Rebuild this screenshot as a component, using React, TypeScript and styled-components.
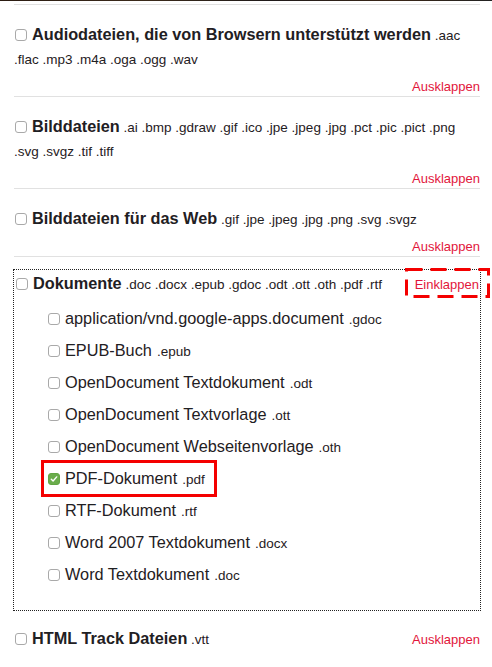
import React from 'react';
import styled, { createGlobalStyle } from 'styled-components';

const Global = createGlobalStyle`
  html, body { margin: 0; padding: 0; background: #fff; }
  body {
    font-family: "Liberation Sans", Arial, Helvetica, sans-serif;
    color: #1f2023;
  }
`;

const Page = styled.div`
  width: 492px;
  overflow: hidden;
`;

const TopStrip = styled.div`
  height: 1px;
  margin-bottom: 3px;
  background: linear-gradient(90deg, #2b1c12, #3b2a1a 30%, #1f1a1a 55%, #3a2616 80%, #222);
`;

const List = styled.div`
  padding: 0 12px 0 14px;
`;

const Divider = styled.div`
  height: 1px;
  background: #e1e1e1;
`;

const Section = styled.section<{ $last?: boolean }>`
  padding: 19px 0 1px;
  border-bottom: ${(p) => (p.$last ? 'none' : '1px solid #e1e1e1')};
`;

const TitleLine = styled.p`
  margin: 0;
  font-size: 13.5px;
  line-height: 24px;
`;

const Name = styled.strong`
  font-size: 16.3px;
  line-height: 16px;
  font-weight: 700;
`;

const Box = styled.span<{ $checked?: boolean }>`
  display: inline-flex;
  align-items: center;
  justify-content: center;
  box-sizing: border-box;
  width: 12px;
  height: 12px;
  border-radius: 3px;
  border: 1px solid ${(p) => (p.$checked ? '#62a544' : '#a9a9a9')};
  background: ${(p) => (p.$checked ? '#6aac4c' : '#fff')};
  vertical-align: -1px;
  margin: 0 5px 0 1px;
  flex: none;
`;

const Footer = styled.div`
  display: flex;
  justify-content: flex-end;
  margin-top: 7px;
  line-height: 16px;
`;

const Toggle = styled.a<{ $float?: boolean }>`
  color: #e2163b;
  font-size: 13px;
  text-decoration: none;
  cursor: pointer;
  position: relative;
  ${(p) => (p.$float ? 'float: right; line-height: 24px;' : '')}
`;

const DashedMark = styled.svg`
  position: absolute;
  left: -10px;
  top: -5px;
  width: 85px;
  height: 30px;
  overflow: visible;
  pointer-events: none;
`;

const Group = styled.div`
  margin: 12px -1px 0 -1px;
  border: 1px dotted #222;
  padding: 3px 1px 20px 1px;
`;

const SubList = styled.ul`
  list-style: none;
  margin: 5px 0 0;
  padding: 0 0 0 33px;
`;

const Item = styled.li`
  display: flex;
  align-items: center;
  height: 32px;
`;

const ItemLabel = styled.label<{ $highlight?: boolean }>`
  position: relative;
  display: inline-flex;
  align-items: center;
  height: 32px;
  font-size: 16.3px;
  white-space: nowrap;
  ${(p) =>
    p.$highlight
      ? `&::after {
    content: '';
    position: absolute;
    left: -7px;
    right: -12px;
    top: -2px;
    bottom: -3px;
    border: 3px solid #f40000;
    pointer-events: none;
  }`
      : ''}
  ${Box} { margin: 1px 5px 0 0; }
`;

const Ext = styled.span`
  font-size: 13.5px;
  margin-left: 5px;
  padding-top: 3px;
`;

const LastSection = styled.section`
  margin-top: 17px;
`;

const Check = ({ checked }: { checked?: boolean }) => (
  <Box $checked={checked}>
    {checked && (
      <svg width="8" height="8" viewBox="0 0 8 8">
        <path d="M1.3 4.2 L3.1 6 L6.7 1.9" fill="none" stroke="#fff" strokeWidth="1.4" strokeLinecap="round" strokeLinejoin="round" />
      </svg>
    )}
  </Box>
);

const categories = [
  { name: 'Audiodateien, die von Browsern unterstützt werden', exts: '.aac .flac .mp3 .m4a .oga .ogg .wav' },
  { name: 'Bilddateien', exts: '.ai .bmp .gdraw .gif .ico .jpe .jpeg .jpg .pct .pic .pict .png .svg .svgz .tif .tiff' },
  { name: 'Bilddateien für das Web', exts: '.gif .jpe .jpeg .jpg .png .svg .svgz' },
];

const docs = [
  { name: 'application/vnd.google-apps.document', ext: '.gdoc' },
  { name: 'EPUB-Buch', ext: '.epub' },
  { name: 'OpenDocument Textdokument', ext: '.odt' },
  { name: 'OpenDocument Textvorlage', ext: '.ott' },
  { name: 'OpenDocument Webseitenvorlage', ext: '.oth' },
  { name: 'PDF-Dokument', ext: '.pdf', checked: true },
  { name: 'RTF-Dokument', ext: '.rtf' },
  { name: 'Word 2007 Textdokument', ext: '.docx' },
  { name: 'Word Textdokument', ext: '.doc' },
];

export default function App() {
  return (
    <Page>
      <Global />
      <TopStrip />
      <List>
        <Divider />
        {categories.map((c) => (
          <Section key={c.name}>
            <TitleLine>
              <Check />
              <Name>{c.name}</Name> {c.exts}
            </TitleLine>
            <Footer>
              <Toggle>Ausklappen</Toggle>
            </Footer>
          </Section>
        ))}
        <Group>
          <TitleLine>
            <Toggle $float>
              Einklappen
              <DashedMark viewBox="0 0 85 30">
                <rect x="1.5" y="1.5" width="82" height="27" fill="none" stroke="#f40000" strokeWidth="3" strokeDasharray="16 8" />
              </DashedMark>
            </Toggle>
            <Check />
            <Name>Dokumente</Name> .doc .docx .epub .gdoc .odt .ott .oth .pdf .rtf
          </TitleLine>
          <SubList>
            {docs.map((d) => (
              <Item key={d.name}>
                <ItemLabel $highlight={d.checked}>
                  <Check checked={d.checked} />
                  {d.name}
                  <Ext>{d.ext}</Ext>
                </ItemLabel>
              </Item>
            ))}
          </SubList>
        </Group>
        <LastSection>
          <TitleLine>
            <Toggle $float>Ausklappen</Toggle>
            <Check />
            <Name>HTML Track Dateien</Name> .vtt
          </TitleLine>
        </LastSection>
      </List>
    </Page>
  );
}
